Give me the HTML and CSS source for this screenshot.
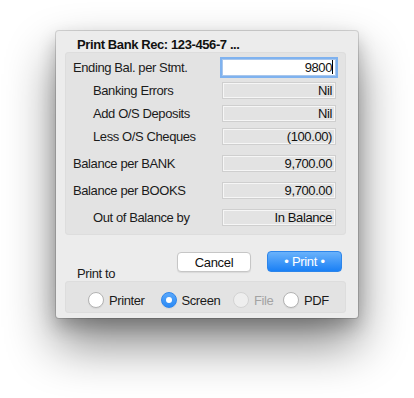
FILE: index.html
```html
<!DOCTYPE html>
<html>
<head>
<meta charset="utf-8">
<link rel="stylesheet" href="styles.css">
</head>
<body>
<div class="window">
  <div class="title">Print Bank Rec: 123-456-7 ...</div>
  <div class="group">
    <div class="row"><span class="label">Ending Bal. per Stmt.</span><span class="field edit">9800<span class="caret"></span></span></div>
    <div class="row r-tight"><span class="label indent">Banking Errors</span><span class="field">Nil</span></div>
    <div class="row r-tight"><span class="label indent">Add O/S Deposits</span><span class="field">Nil</span></div>
    <div class="row r-tight"><span class="label indent">Less O/S Cheques</span><span class="field">(100.00)</span></div>
    <div class="row r-loose"><span class="label">Balance per BANK</span><span class="field">9,700.00</span></div>
    <div class="row r-loose"><span class="label">Balance per BOOKS</span><span class="field">9,700.00</span></div>
    <div class="row r-loose"><span class="label indent">Out of Balance by</span><span class="field">In Balance</span></div>
  </div>
  <div class="actions">
    <span class="print-to">Print to</span>
    <button class="btn cancel">Cancel</button>
    <button class="btn primary">• Print •</button>
  </div>
  <div class="radios">
    <label class="radio w-printer"><span class="dot"></span><span>Printer</span></label>
    <label class="radio w-screen"><span class="dot on"></span><span>Screen</span></label>
    <label class="radio w-file disabled"><span class="dot"></span><span>File</span></label>
    <label class="radio"><span class="dot"></span><span>PDF</span></label>
  </div>
</div>
</body>
</html>
```
FILE: styles.css
```css
html, body {
  margin: 0;
  background: #ffffff;
}
body {
  box-sizing: border-box;
  min-height: 398px;
  padding: 31px 0 0 56px;
  font-family: "Liberation Sans", Arial, sans-serif;
  font-size: 13px;
  letter-spacing: -0.4px;
  color: #1b1b1b;
}
.window {
  box-sizing: border-box;
  width: 302px;
  height: 287px;
  background: #ececec;
  border-radius: 3px;
  box-shadow: 0 0 0 1px rgba(0,0,0,0.14), 0 8px 18px rgba(0,0,0,0.22), 0 26px 50px rgba(0,0,0,0.48);
}
.title {
  box-sizing: border-box;
  height: 21px;
  padding: 7px 0 0 21px;
  line-height: 14px;
  font-weight: bold;
  color: #111;
}
.group {
  box-sizing: border-box;
  height: 183px;
  margin: 0 12px 0 9px;
  padding: 7px 10px 0 8px;
  background: #e3e3e3;
  border-radius: 4px;
  box-shadow: inset 0 0 0 1px #dddddd;
}
.row {
  display: flex;
  align-items: center;
  height: 17px;
}
.r-tight { margin-top: 6px; }
.r-loose { margin-top: 10px; }
.label {
  flex: 1;
  line-height: 14px;
}
.indent { padding-left: 20px; }
.field {
  box-sizing: border-box;
  width: 114px;
  height: 17px;
  line-height: 15px;
  padding: 0 3px;
  text-align: right;
  background: #e3e3e3;
  border: 1px solid #cfcfcf;
  box-shadow: inset 0 0 0 1px #f6f6f6;
  color: #111;
}
.field.edit {
  background: #ffffff;
  border: 1px solid #a9c7ec;
  box-shadow: 0 0 0 2px #7fb2ef;
  padding-right: 2px;
}
.caret {
  display: inline-block;
  width: 1px;
  height: 14px;
  background: #000;
  vertical-align: -2px;
}
.actions {
  box-sizing: border-box;
  height: 29px;
  margin-top: 17px;
  padding: 0 16px 0 21px;
  display: flex;
}
.print-to {
  align-self: flex-end;
  flex: 1;
  line-height: 14px;
}
.btn {
  box-sizing: border-box;
  font-family: inherit;
  font-size: 13px;
  letter-spacing: -0.3px;
  padding: 0;
  border-radius: 4px;
  align-self: flex-start;
}
.cancel {
  width: 74px;
  height: 20px;
  margin-right: 16px;
  background: #ffffff;
  border: 1px solid #c6c6c6;
  box-shadow: 0 1px 1px rgba(0,0,0,0.08);
  color: #111;
}
.primary {
  width: 75px;
  height: 21px;
  margin-top: -1px;
  background: linear-gradient(#6ab2fb, #1a80f5);
  border: 1px solid #2d85ea;
  color: #ffffff;
}
.radios {
  box-sizing: border-box;
  height: 32px;
  margin: 0 12px 0 9px;
  padding: 6px 0 0 23px;
  display: flex;
  align-items: center;
  background: #e3e3e3;
  border-radius: 4px;
  box-shadow: inset 0 0 0 1px #dddddd;
}
.radio {
  display: flex;
  align-items: center;
}
.w-printer { width: 72.5px; }
.w-screen { width: 72.5px; }
.w-file { width: 50px; }
.dot {
  box-sizing: border-box;
  width: 16px;
  height: 16px;
  margin-right: 5px;
  border-radius: 50%;
  background: #ffffff;
  border: 1px solid #b3b3b3;
  box-shadow: 0 1px 1px rgba(0,0,0,0.06);
  display: flex;
  align-items: center;
  justify-content: center;
}
.dot.on {
  background: linear-gradient(#5aa8fb, #2b8af5);
  border-color: #2f86ec;
}
.dot.on::after {
  content: "";
  width: 6px;
  height: 6px;
  border-radius: 50%;
  background: #ffffff;
}
.disabled { color: #a3a3a3; }
.disabled .dot {
  background: #eeeeee;
  border-color: #d3d3d3;
  box-shadow: none;
}
```
